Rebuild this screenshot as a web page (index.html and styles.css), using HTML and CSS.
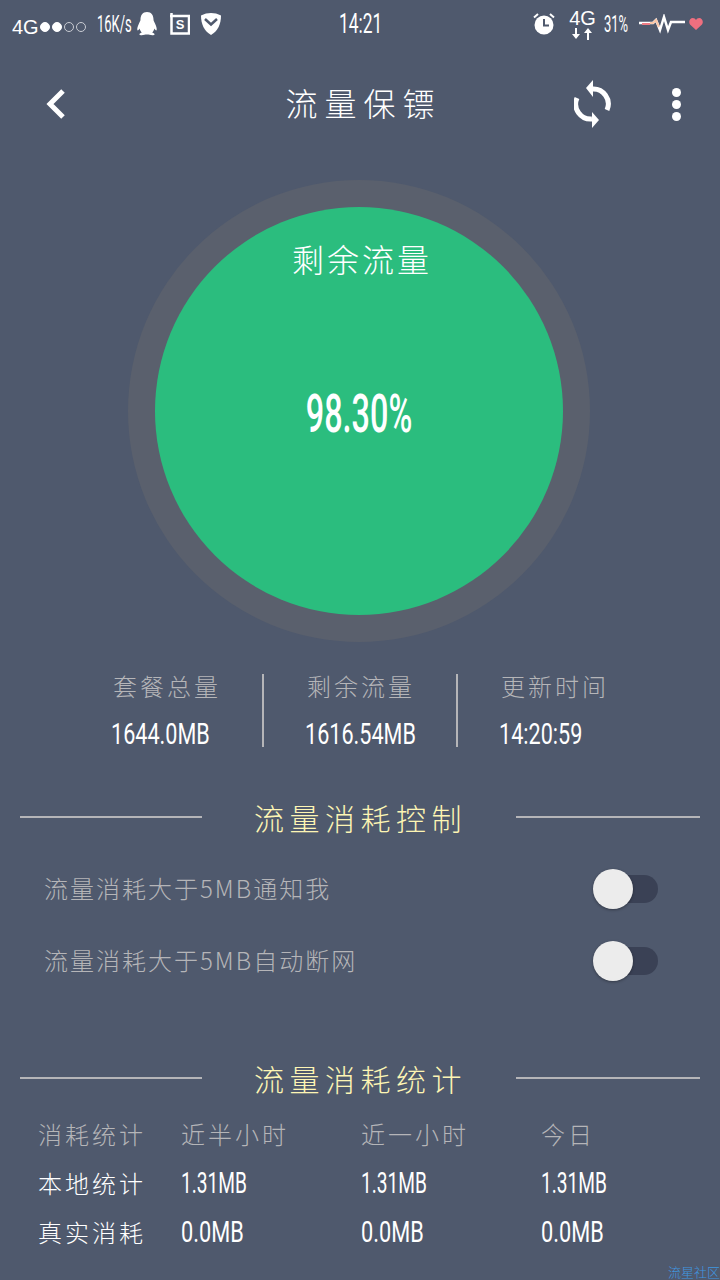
FILE: index.html
```html
<!DOCTYPE html>
<html lang="zh">
<head>
    <meta charset="UTF-8">
    <meta name="viewport" content="width=device-width, initial-scale=1.0">
    <title>流量保镖</title>
    <link rel="stylesheet" href="styles.css">
</head>
<body>
    <div class="page">
        <div class="status-bar">
            <div class="status-left">
                <span class="carrier">4G</span>
                <span class="signal"><i class="on"></i><i class="on"></i><i></i><i></i></span>
                <span class="speed">16K/s</span>
                <svg class="icon-qq" width="22" height="24" viewBox="0 0 22 24"><path fill="#fff" d="M11 0C6.500 0 4.500 3.500 4.500 7.500C4.500 9 3.800 9.500 3 11.500C1.500 14.500 .8 17.500 1.500 18.300C2 18.800 3 17.600 3.600 16.500C4 18.200 4.800 19.600 5.800 20.500C4.200 21 3.200 21.700 3.400 22.500C3.700 23.500 6.500 23.500 8.500 22.800C9.500 22.500 12.500 22.500 13.500 22.800C15.500 23.500 18.300 23.500 18.600 22.500C18.800 21.700 17.800 21 16.200 20.500C17.200 19.600 18 18.200 18.400 16.500C19 17.600 20 18.800 20.500 18.300C21.200 17.500 20.500 14.500 19 11.500C18.200 9.500 17.500 9 17.500 7.500C17.500 3.500 15.500 0 11 0Z"/></svg>
                <svg class="icon-s" width="20" height="22" viewBox="0 0 20 22"><path fill="none" stroke="#fff" stroke-width="2.500" d="M1.500 0V20.500H19V3H0"/><text x="10" y="15.500" text-anchor="middle" class="s-letter">S</text></svg>
                <svg class="icon-shield" width="20" height="22" viewBox="0 0 20 22"><path fill="#fff" d="M10 0C13 0 17 .8 20 2.500C20 11 17 18 10 22C3 18 0 11 0 2.500C3 .8 7 0 10 0Z"/><path fill="none" stroke="#4f596d" stroke-width="2.500" d="M4 6L10 11.500L16 6"/></svg>
            </div>
            <div class="clock">14:21</div>
            <div class="status-right">
                <svg class="icon-alarm" width="22" height="24" viewBox="0 0 22 24"><circle cx="11" cy="13" r="9.500" fill="#fff"/><path fill="none" stroke="#4f596d" stroke-width="2" d="M11 7V13.500H16"/><path fill="none" stroke="#fff" stroke-width="2" d="M1 5.500L5 2M21 5.500L17 2"/></svg>
                <div class="net">
                    <span class="net-label">4G</span>
                    <svg width="22" height="12" viewBox="0 0 22 12"><path fill="#fff" d="M3 0H5V6H8L4 11L0 6H3ZM17 12H15V5H12L16 0L20 5H17Z"/></svg>
                </div>
                <span class="battery">31%</span>
                <svg class="icon-pulse" width="46" height="20" viewBox="0 0 46 20"><path fill="none" stroke="#fff" stroke-width="2.500" d="M0 9H14L17 6L21 16L25 3L29 16L32 8H46"/><path fill="none" stroke="#ef7d86" stroke-width="2" d="M3 10H11"/><path fill="none" stroke="#f8c6a8" stroke-width="2" d="M11 9H14L17 6L20 13"/></svg>
                <svg class="icon-heart" width="14" height="12" viewBox="0 0 14 12"><path fill="#ee6f7f" d="M7 12L1 6.500C-1 3.500 1 0 3.800 0C5.200 0 6.400 .8 7 2C7.600 .8 8.800 0 10.200 0C13 0 15 3.500 13 6.500Z"/></svg>
            </div>
        </div>

        <div class="nav-bar">
            <svg class="nav-back" width="22" height="32" viewBox="0 0 22 32"><path fill="none" stroke="#fff" stroke-width="5" d="M19 3L6 16L19 29"/></svg>
            <div class="nav-title">流量保镖</div>
            <svg class="nav-sync" width="38" height="48" viewBox="0 0 38 48"><path fill="none" stroke="#fff" stroke-width="5" d="M18 9A15 15 0 0 1 33 30M18 39A15 15 0 0 1 3 18"/><path fill="#fff" d="M12 8L19 0V17ZM25 40L18 32V48Z"/></svg>
            <div class="nav-more"><i></i><i></i><i></i></div>
        </div>

        <div class="gauge-wrap">
            <div class="gauge-ring">
                <div class="gauge">
                    <div class="gauge-label">剩余流量</div>
                    <div class="gauge-value">98.30%</div>
                </div>
            </div>
        </div>

        <div class="stats">
            <div class="stat">
                <div class="stat-label">套餐总量</div>
                <div class="stat-value">1644.0MB</div>
            </div>
            <div class="stat">
                <div class="stat-label">剩余流量</div>
                <div class="stat-value">1616.54MB</div>
            </div>
            <div class="stat">
                <div class="stat-label">更新时间</div>
                <div class="stat-value">14:20:59</div>
            </div>
        </div>

        <div class="section-head first">
            <span class="section-line"></span>
            <span class="section-title">流量消耗控制</span>
            <span class="section-line"></span>
        </div>

        <div class="toggle-row">
            <span class="toggle-text">流量消耗大于5MB通知我</span>
            <span class="switch"><i></i></span>
        </div>
        <div class="toggle-row">
            <span class="toggle-text">流量消耗大于5MB自动断网</span>
            <span class="switch"><i></i></span>
        </div>

        <div class="section-head second">
            <span class="section-line"></span>
            <span class="section-title">流量消耗统计</span>
            <span class="section-line"></span>
        </div>

        <div class="usage">
            <div class="usage-head">消耗统计</div>
            <div class="usage-head">近半小时</div>
            <div class="usage-head">近一小时</div>
            <div class="usage-head">今日</div>
            <div class="usage-name">本地统计</div>
            <div class="usage-num">1.31MB</div>
            <div class="usage-num">1.31MB</div>
            <div class="usage-num">1.31MB</div>
            <div class="usage-name">真实消耗</div>
            <div class="usage-num zero">0.0MB</div>
            <div class="usage-num zero">0.0MB</div>
            <div class="usage-num zero">0.0MB</div>
        </div>

        <div class="watermark">流星社区</div>
    </div>
</body>
</html>
```

FILE: styles.css
```css
html, body {
    margin: 0;
    padding: 0;
}
body {
    width: 720px;
    height: 1280px;
    overflow: hidden;
    background-color: #4f596d;
    color: #fff;
    font-family: "Noto Sans CJK SC", "Noto Sans", sans-serif;
    font-weight: 300;
}
.page {
    position: relative;
    width: 720px;
    height: 1280px;
    overflow: hidden;
}

/* status bar */
.status-bar {
    position: relative;
    display: flex;
    justify-content: space-between;
    align-items: center;
    height: 48px;
    padding: 0 17px 0 12px;
}
.status-left, .status-right {
    display: flex;
    align-items: center;
}
.carrier {
    font-family: "Liberation Sans", sans-serif;
    font-size: 20px;
    margin-top: 6px;
}
.signal {
    display: flex;
    gap: 2px;
    margin: 6px 0 0 1px;
}
.signal i {
    width: 10px;
    height: 10px;
    border: 1px solid #c9ccd3;
    border-radius: 50%;
    box-sizing: border-box;
}
.signal i.on {
    background-color: #fff;
    border-color: #fff;
}
.speed {
    width: 34px;
    margin-left: 11px;
    font-family: Roboto, "Liberation Sans", sans-serif;
    font-size: 24px;
    font-weight: 400;
    white-space: nowrap;
    transform: scaleX(.54);
    transform-origin: left center;
}
.icon-qq {
    margin-left: 5px;
}
.icon-s {
    margin-left: 12px;
}
.s-letter {
    fill: #fff;
    font-family: "Liberation Sans", sans-serif;
    font-size: 13px;
    font-weight: 700;
}
.icon-shield {
    margin-left: 11px;
}
.clock {
    position: absolute;
    left: 339px;
    top: 8px;
    font-family: Roboto, "Liberation Sans", sans-serif;
    font-size: 28px;
    font-weight: 400;
    line-height: 32px;
    transform: scaleX(.62);
    transform-origin: left center;
}
.icon-alarm {
    margin-right: 14px;
}
.net {
    display: flex;
    flex-direction: column;
    align-items: center;
    width: 27px;
    margin-right: 8px;
}
.net-label {
    font-family: "Liberation Sans", sans-serif;
    font-size: 20px;
    line-height: 20px;
}
.battery {
    width: 24px;
    margin-right: 11px;
    font-family: Roboto, "Liberation Sans", sans-serif;
    font-size: 24px;
    font-weight: 400;
    white-space: nowrap;
    transform: scaleX(.54);
    transform-origin: left center;
}
.icon-heart {
    margin-left: 4px;
}

/* title bar */
.nav-bar {
    position: relative;
    display: flex;
    align-items: center;
    justify-content: space-between;
    height: 112px;
    padding: 0 39px 0 44px;
}
.nav-title {
    position: absolute;
    left: 0;
    right: 0;
    top: 30px;
    padding-left: 7px;
    text-align: center;
    font-size: 32px;
    letter-spacing: 7px;
    line-height: 48px;
}
.nav-sync {
    margin-left: auto;
    margin-right: 60px;
}
.nav-more {
    display: flex;
    flex-direction: column;
    gap: 3px;
}
.nav-more i {
    width: 9px;
    height: 9px;
    background-color: #fff;
    border-radius: 50%;
}

/* gauge */
.gauge-wrap {
    display: flex;
    justify-content: center;
    margin-top: 20px;
}
.gauge-ring {
    width: 408px;
    height: 408px;
    margin-left: -2px;
    padding: 27px;
    border-radius: 50%;
    background-color: #5a606d;
}
.gauge {
    height: 408px;
    border-radius: 50%;
    background-color: #2bbd7e;
    text-align: center;
}
.gauge-label {
    padding: 28px 0 0 6px;
    font-size: 32px;
    line-height: 46px;
    letter-spacing: 3px;
}
.gauge-value {
    margin-top: 103px;
    font-family: Roboto, "Liberation Sans", sans-serif;
    font-size: 54px;
    font-weight: 500;
    line-height: 60px;
    transform: scaleX(.6);
}

/* stats under the gauge */
.stats {
    display: grid;
    grid-template-columns: repeat(3, 194px);
    margin: 32px 0 0 70px;
}
.stat {
    height: 73px;
    padding-left: 43px;
    border-right: 2px solid #b5b5b8;
    box-sizing: border-box;
}
.stat:last-child {
    border-right: none;
}
.stat-label {
    margin-top: -6px;
    font-size: 24px;
    line-height: 36px;
    letter-spacing: 3px;
    color: #b5b5b8;
}
.stat-value {
    margin: 12px 0 0 -2px;
    font-family: Roboto, "Liberation Sans", sans-serif;
    font-size: 30px;
    font-weight: 400;
    line-height: 36px;
    white-space: nowrap;
    transform: scaleX(.72);
    transform-origin: left center;
}

/* section titles */
.section-head {
    display: grid;
    grid-template-columns: 182px 1fr 184px;
    align-items: center;
    margin: 0 20px;
    height: 44px;
}
.section-head.first {
    margin-top: 48px;
}
.section-head.second {
    margin-top: 59px;
}
.section-line {
    height: 2px;
    background-color: #b5b5b8;
}
.section-title {
    padding-left: 3px;
    font-size: 30px;
    line-height: 44px;
    letter-spacing: 5.500px;
    text-align: center;
    color: #fdf5b4;
}

/* toggles */
.toggle-row {
    display: flex;
    align-items: center;
    justify-content: space-between;
    height: 72px;
    padding: 0 62px 0 44px;
}
.section-head.first + .toggle-row {
    margin-top: 14px;
}
.toggle-text {
    padding-bottom: 4px;
    font-size: 24px;
    letter-spacing: 2px;
    color: #b5b5b8;
}
.switch {
    position: relative;
    width: 46px;
    height: 28px;
    border-radius: 14px;
    background-color: #3a4155;
}
.switch i {
    position: absolute;
    left: -19px;
    top: -6px;
    width: 40px;
    height: 40px;
    border-radius: 50%;
    background-color: #ececec;
    box-shadow: 0 1px 3px rgba(0, 0, 0, .35);
}

/* usage table */
.usage {
    display: grid;
    grid-template-columns: 143px 180px 180px 1fr;
    grid-auto-rows: 49px;
    align-items: center;
    margin: 9px 0 0 38px;
}
.usage-head {
    font-size: 24px;
    letter-spacing: 3px;
    color: #b5b5b8;
}
.usage-name {
    font-size: 24px;
    letter-spacing: 3px;
}
.usage-num {
    font-family: Roboto, "Liberation Sans", sans-serif;
    font-size: 29px;
    font-weight: 400;
    white-space: nowrap;
    transform: scaleX(.66);
    transform-origin: left center;
}
.usage-num.zero {
    transform: scaleX(.75);
}

.watermark {
    position: absolute;
    right: 0;
    bottom: 0;
    font-size: 13px;
    line-height: 16px;
    color: #3f97e0;
}
```
